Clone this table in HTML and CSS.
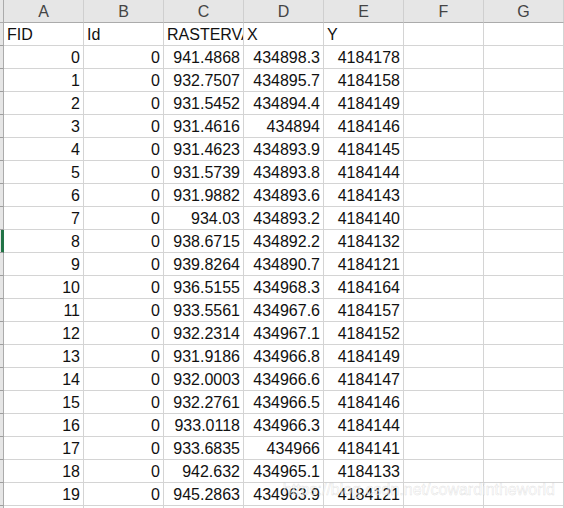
FILE: index.html
```html
<!DOCTYPE html>
<html>
<head>
<meta charset="utf-8">
<link rel="stylesheet" href="styles.css">
</head>
<body>
<div class="sheet">
  <div class="corner"></div>
  <div class="ch">A</div><div class="ch">B</div><div class="ch">C</div><div class="ch">D</div><div class="ch">E</div><div class="ch">F</div><div class="ch">G</div>

  <div class="rh"></div>
  <div class="c t">FID</div><div class="c t">Id</div><div class="c t clip">RASTERVALU</div><div class="c t">X</div><div class="c t">Y</div><div class="c"></div><div class="c"></div>

  <div class="rh"></div><div class="c n">0</div><div class="c n">0</div><div class="c n">941.4868</div><div class="c n">434898.3</div><div class="c n">4184178</div><div class="c"></div><div class="c"></div>
  <div class="rh"></div><div class="c n">1</div><div class="c n">0</div><div class="c n">932.7507</div><div class="c n">434895.7</div><div class="c n">4184158</div><div class="c"></div><div class="c"></div>
  <div class="rh"></div><div class="c n">2</div><div class="c n">0</div><div class="c n">931.5452</div><div class="c n">434894.4</div><div class="c n">4184149</div><div class="c"></div><div class="c"></div>
  <div class="rh"></div><div class="c n">3</div><div class="c n">0</div><div class="c n">931.4616</div><div class="c n">434894</div><div class="c n">4184146</div><div class="c"></div><div class="c"></div>
  <div class="rh"></div><div class="c n">4</div><div class="c n">0</div><div class="c n">931.4623</div><div class="c n">434893.9</div><div class="c n">4184145</div><div class="c"></div><div class="c"></div>
  <div class="rh"></div><div class="c n">5</div><div class="c n">0</div><div class="c n">931.5739</div><div class="c n">434893.8</div><div class="c n">4184144</div><div class="c"></div><div class="c"></div>
  <div class="rh"></div><div class="c n">6</div><div class="c n">0</div><div class="c n">931.9882</div><div class="c n">434893.6</div><div class="c n">4184143</div><div class="c"></div><div class="c"></div>
  <div class="rh"></div><div class="c n">7</div><div class="c n">0</div><div class="c n">934.03</div><div class="c n">434893.2</div><div class="c n">4184140</div><div class="c"></div><div class="c"></div>
  <div class="rh sel"></div><div class="c n">8</div><div class="c n">0</div><div class="c n">938.6715</div><div class="c n">434892.2</div><div class="c n">4184132</div><div class="c"></div><div class="c"></div>
  <div class="rh"></div><div class="c n">9</div><div class="c n">0</div><div class="c n">939.8264</div><div class="c n">434890.7</div><div class="c n">4184121</div><div class="c"></div><div class="c"></div>
  <div class="rh"></div><div class="c n">10</div><div class="c n">0</div><div class="c n">936.5155</div><div class="c n">434968.3</div><div class="c n">4184164</div><div class="c"></div><div class="c"></div>
  <div class="rh"></div><div class="c n">11</div><div class="c n">0</div><div class="c n">933.5561</div><div class="c n">434967.6</div><div class="c n">4184157</div><div class="c"></div><div class="c"></div>
  <div class="rh"></div><div class="c n">12</div><div class="c n">0</div><div class="c n">932.2314</div><div class="c n">434967.1</div><div class="c n">4184152</div><div class="c"></div><div class="c"></div>
  <div class="rh"></div><div class="c n">13</div><div class="c n">0</div><div class="c n">931.9186</div><div class="c n">434966.8</div><div class="c n">4184149</div><div class="c"></div><div class="c"></div>
  <div class="rh"></div><div class="c n">14</div><div class="c n">0</div><div class="c n">932.0003</div><div class="c n">434966.6</div><div class="c n">4184147</div><div class="c"></div><div class="c"></div>
  <div class="rh"></div><div class="c n">15</div><div class="c n">0</div><div class="c n">932.2761</div><div class="c n">434966.5</div><div class="c n">4184146</div><div class="c"></div><div class="c"></div>
  <div class="rh"></div><div class="c n">16</div><div class="c n">0</div><div class="c n">933.0118</div><div class="c n">434966.3</div><div class="c n">4184144</div><div class="c"></div><div class="c"></div>
  <div class="rh"></div><div class="c n">17</div><div class="c n">0</div><div class="c n">933.6835</div><div class="c n">434966</div><div class="c n">4184141</div><div class="c"></div><div class="c"></div>
  <div class="rh"></div><div class="c n">18</div><div class="c n">0</div><div class="c n">942.632</div><div class="c n">434965.1</div><div class="c n">4184133</div><div class="c"></div><div class="c"></div>
  <div class="rh"></div><div class="c n">19</div><div class="c n">0</div><div class="c n">945.2863</div><div class="c n">434963.9</div><div class="c n">4184121</div><div class="c"></div><div class="c"></div>
  <div class="rh"></div><div class="c"></div><div class="c"></div><div class="c"></div><div class="c"></div><div class="c"></div><div class="c"></div><div class="c"></div>
  <div class="watermark">https://blog.csdn.net/cowardintheworld</div>
</div>
</body>
</html>
```

FILE: styles.css
```css
html, body {
  margin: 0;
  padding: 0;
  background: #fff;
  overflow: hidden;
}
.sheet {
  position: relative;
  display: grid;
  grid-template-columns: 4px repeat(7, 80px);
  grid-template-rows: 23px repeat(22, 23px);
  font-family: "Liberation Sans", Arial, sans-serif;
  font-size: 16px;
  color: #111;
  width: 564px;
  height: 508px;
  overflow: hidden;
}
.corner {
  background: #e6e6e6;
  border-right: 1px solid #ababab;
  border-bottom: 1px solid #ababab;
}
.ch {
  box-sizing: border-box;
  background: #e6e6e6;
  border-right: 1px solid #cfcfcf;
  border-bottom: 1px solid #ababab;
  color: #444;
  text-align: center;
  line-height: 22px;
  padding-top: 1px;
}
.rh {
  box-sizing: border-box;
  background: #e6e6e6;
  border-right: 1px solid #ababab;
  border-bottom: 1px solid #9e9e9e;
}
.rh.sel {
  background: linear-gradient(to right, #e6e6e6 0 1px, #217346 1px 3px);
  border-right-color: #217346;
}
.c {
  box-sizing: border-box;
  border-right: 1px solid #d4d4d4;
  border-bottom: 1px solid #d4d4d4;
  line-height: 22px;
  padding: 1px 3px 0 3px;
  white-space: nowrap;
  overflow: hidden;
}
.t {
  text-align: left;
}
.clip {
  text-overflow: clip;
  padding-right: 0;
}
.n {
  text-align: right;
}
.watermark {
  position: absolute;
  right: 9px;
  top: 481px;
  font-size: 16px;
  color: rgba(255, 255, 255, 0.6);
  -webkit-text-stroke: 0.5px rgba(180, 180, 180, 0.4);
  white-space: nowrap;
  pointer-events: none;
}
```
